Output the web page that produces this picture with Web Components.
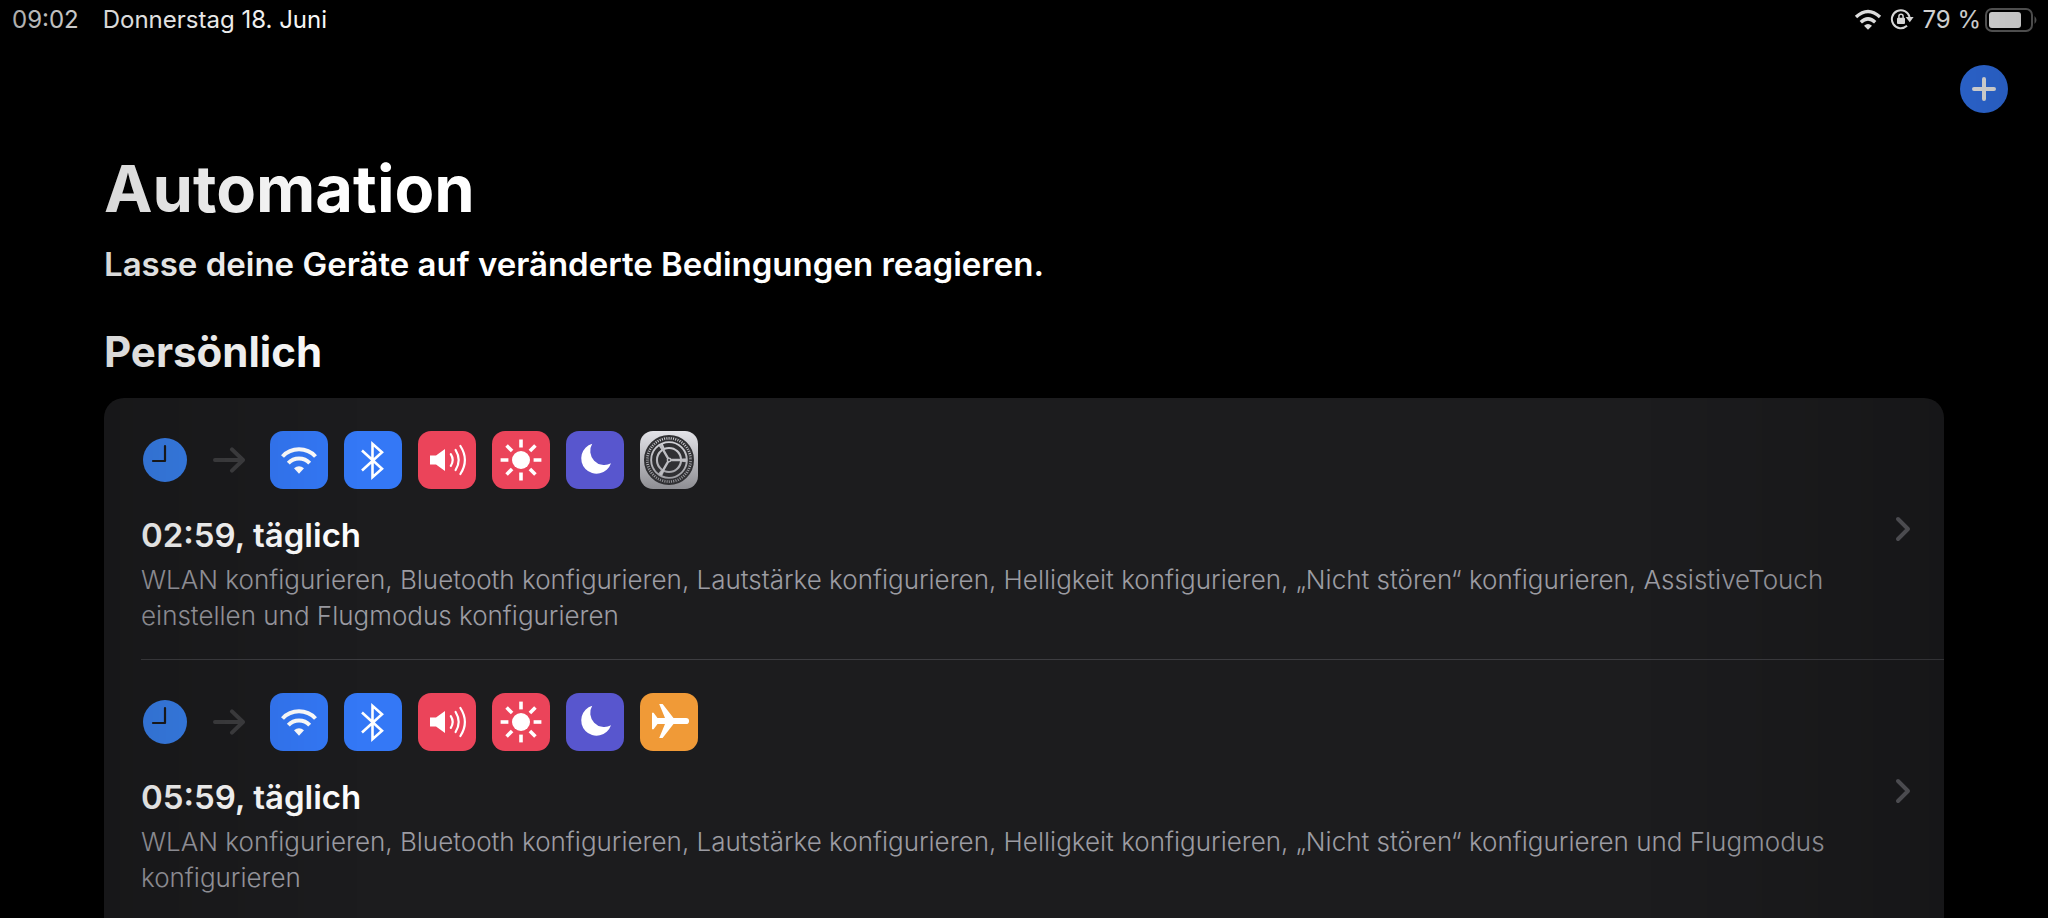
<!DOCTYPE html>
<html lang="de">
<head>
<meta charset="utf-8">
<meta name="viewport" content="width=device-width, initial-scale=1">
<title>Automation</title>
<style>
    html, body {
        margin: 0;
        height: 100%;
        background: #000;
        color: #fff;
        font-family: Inter, "Liberation Sans", sans-serif;
    }
</style>
</head>
<body>

<automation-app>
    <status-bar slot="status" time="09:02" date="Donnerstag 18. Juni" battery="79"></status-bar>
    <page-heading slot="heading" subtitle="Lasse deine Geräte auf veränderte Bedingungen reagieren.">Automation</page-heading>
    <automation-group label="Persönlich">
        <automation-row label="02:59, täglich" actions="wifi bluetooth volume brightness moon settings">
            WLAN konfigurieren, Bluetooth konfigurieren, Lautstärke konfigurieren, Helligkeit konfigurieren, „Nicht stören“ konfigurieren, AssistiveTouch einstellen und Flugmodus konfigurieren
        </automation-row>
        <automation-row label="05:59, täglich" actions="wifi bluetooth volume brightness moon airplane">
            WLAN konfigurieren, Bluetooth konfigurieren, Lautstärke konfigurieren, Helligkeit konfigurieren, „Nicht stören“ konfigurieren und Flugmodus konfigurieren
        </automation-row>
    </automation-group>
</automation-app>

<script>
const wifiShape = `
    <path d="M12.5 25.5A22.6 22.6 0 0 1 45.5 25.5M18.3 32.2A14.6 14.6 0 0 1 39.7 32.2" fill="none" stroke="#fff" stroke-width="4"/>
    <path d="M24 37.3Q29 33.2 34 37.3L29 42.7z" fill="#fff"/>`;

// one ray of the sun, turned in steps of 45 degrees
const rays = [0, 45, 90, 135, 180, 225, 270, 315]
    .map(a => `<path d="M29 8.6V16.4" transform="rotate(${a} 29 29)"/>`).join("");

const tiles = {
    wifi: { color: "#3478f6", shape: wifiShape },
    bluetooth: {
        color: "#3478f6",
        shape: `<path d="M18 19.5L38 37.7L28.5 46.2V12.8L38 21.3L18 39.5" fill="none" stroke="#fff" stroke-width="2.6"/>`
    },
    volume: {
        color: "#eb445a",
        shape: `<path d="M12 24.5H18L27 18V40L18 33.5H12z" fill="#fff"/>
            <path d="M32.8 23.2Q36.6 29 32.8 34.8M37.6 19Q43.8 29 37.6 39M42.4 15Q51.4 29 42.4 43" fill="none" stroke="#fff" stroke-width="2.2" stroke-linecap="round"/>`
    },
    brightness: {
        color: "#eb445a",
        shape: `<circle cx="29" cy="29" r="9" fill="#fff"/><g stroke="#fff" stroke-width="3.6">${rays}</g>`
    },
    moon: {
        color: "#5856ce",
        shape: `<path d="M26.2 12.7A15.3 15.3 0 1 0 45 32.3A14.1 14.1 0 0 1 26.2 12.7z" fill="#fff"/>`
    },
    settings: {
        color: "linear-gradient(#e3e3e8, #8e8e93)",
        shape: `<g fill="none" stroke="#303033">
            <circle cx="29" cy="29" r="24" stroke-width="2"/>
            <circle cx="29" cy="29" r="21.7" stroke-width="3" stroke-dasharray="1.3 0.97"/>
            <circle cx="29" cy="29" r="19.6" stroke-width="1.6"/>
            <circle cx="29" cy="29" r="15" stroke-width="3.8" stroke-dasharray="27.4 4" stroke-dashoffset="-2"/></g>
            <circle cx="29" cy="29" r="11" fill="#303033"/>
            <path d="M29 29H46.5M29 29L20.3 13.9M29 29L20.3 44.1" stroke="#bdbdc1" stroke-width="2.4"/>
            <circle cx="29" cy="29" r="2.4" fill="#bdbdc1"/><circle cx="29" cy="29" r="1" fill="#303033"/>`
    },
    airplane: {
        color: "#f09a37",
        shape: `<path d="M46 24.9H33.5L22.6 11H19.2L25 24.9H17.5L13.6 19.8H12V36.2H13.6L17.5 31.1H25L19.2 45H22.6L33.5 31.1H46A3.1 3.1 0 0 0 46 24.9z" fill="#fff"/>`
    }
};

class StatusBar extends HTMLElement {
    constructor() {
        super();
        this.attachShadow({ mode: "open" });
    }

    connectedCallback() {
        this.shadowRoot.innerHTML = `
          <style>
              :host {
                  display: flex;
                  align-items: center;
                  justify-content: space-between;
                  height: 40px;
                  padding: 0 10px 0 12px;
                  font-size: 24px;
                  line-height: 30px;
              }
              div { display: flex; align-items: center; }
              .left { gap: 24px; }
              .right { gap: 8px; }
              .battery { gap: 4px; }
              svg { display: block; }
          </style>
          <div class="left"><time>${this.getAttribute("time")}</time><span>${this.getAttribute("date")}</span></div>
          <div class="right">
              <svg width="28" height="22" viewBox="0 0 28 22" role="img" aria-label="WLAN">
                  <path d="M2 8Q14 -3 26 8M6.8 13.2Q14 6.6 21.2 13.2" fill="none" stroke="#fff" stroke-width="3.4"/>
                  <path d="M10 16.8Q14 13.4 18 16.8L14 20.8z" fill="#fff"/>
              </svg>
              <svg width="24" height="22" viewBox="0 0 24 22" role="img" aria-label="Ausrichtungssperre">
                  <path d="M19.6 8A9 9 0 1 0 17 16.8" fill="none" stroke="#fff" stroke-width="2"/>
                  <path d="M15.6 8H23.6L19.8 13.2z" fill="#fff"/>
                  <rect x="7" y="8.8" width="8" height="6.2" rx="1" fill="#fff"/>
                  <path d="M8.9 9.4V7.4A2.1 2.1 0 0 1 13.1 7.4V9.4" fill="none" stroke="#fff" stroke-width="1.5"/>
              </svg>
              <div class="battery">
                  <span>${this.getAttribute("battery")} %</span>
                  <svg width="53" height="24" viewBox="0 0 53 24" role="img" aria-label="Batterie">
                      <rect x="1" y="1" width="46" height="22" rx="6" fill="none" stroke="#666" stroke-width="2"/>
                      <rect x="4" y="4" width="32" height="16" rx="3" fill="#fff"/>
                      <path d="M49.5 8Q53.5 12 49.5 16z" fill="#666"/>
                  </svg>
              </div>
          </div>
        `;
    }
}

class PageHeading extends HTMLElement {
    constructor() {
        super();
        this.attachShadow({ mode: "open" });
    }

    connectedCallback() {
        this.shadowRoot.innerHTML = `
          <style>
              :host { display: block; }
              h1, p { margin: 0; }
              h1 { font-size: 65px; line-height: 82px; font-weight: 700; }
              p { margin-top: 14px; font-size: 33px; line-height: 40px; font-weight: 600; }
          </style>
          <h1><slot></slot></h1>
          <p>${this.getAttribute("subtitle")}</p>
        `;
    }
}

class AutomationGroup extends HTMLElement {
    constructor() {
        super();
        this.attachShadow({ mode: "open" });
    }

    connectedCallback() {
        this.shadowRoot.innerHTML = `
          <style>
              :host { display: block; }
              h2 { margin: 0 0 20px; font-size: 42px; line-height: 53px; font-weight: 700; }
              .card { background: #1c1c1e; border-radius: 20px 20px 0 0; overflow: hidden; }
              ::slotted(:not(:last-child)) { border-bottom: 1px solid #3d3d41; }
          </style>
          <h2>${this.getAttribute("label")}</h2>
          <div class="card"><slot></slot></div>
        `;
    }
}

class ActionIcon extends HTMLElement {
    constructor() {
        super();
        this.attachShadow({ mode: "open" });
    }

    connectedCallback() {
        const tile = tiles[this.getAttribute("name")];
        this.shadowRoot.innerHTML = `
          <style>
              :host {
                  display: block;
                  width: 58px;
                  height: 58px;
                  border-radius: 13px;
                  background: ${tile.color};
              }
              svg { display: block; }
          </style>
          <svg width="58" height="58" viewBox="0 0 58 58" aria-hidden="true">${tile.shape}</svg>
        `;
    }
}

class AutomationRow extends HTMLElement {
    constructor() {
        super();
        this.attachShadow({ mode: "open" });
    }

    connectedCallback() {
        const icons = this.getAttribute("actions").split(" ")
            .map(name => `<action-icon name="${name}"></action-icon>`).join("");

        this.shadowRoot.innerHTML = `
          <style>
              :host { display: block; margin-left: 37px; }
              a {
                  display: flex;
                  align-items: center;
                  gap: 32px;
                  padding-right: 32px;
                  color: inherit;
                  text-decoration: none;
              }
              .body { flex: 1; padding: 33px 0 25px; }
              .icons { display: flex; align-items: center; gap: 16px; }
              .clock { margin: 0 10px 0 2px; }
              .arrow { margin-right: 9px; }
              h3 { margin: 26px 0 7px; font-size: 33px; line-height: 40px; font-weight: 600; }
              p { margin: 0; color: #9c9ca3; font-size: 26px; line-height: 36px; font-weight: 300; }
              svg { display: block; flex: none; }
          </style>
          <a href="#automation">
              <div class="body">
                  <div class="icons">
                      <svg class="clock" width="44" height="44" viewBox="0 0 44 44" aria-hidden="true">
                          <circle cx="22" cy="22" r="22" fill="#3a82f0"/>
                          <path d="M22 8V23H10" fill="none" stroke="#1c1c1e" stroke-width="2.2" stroke-linecap="round" stroke-linejoin="round"/>
                      </svg>
                      <svg class="arrow" width="32" height="26" viewBox="0 0 32 26" aria-hidden="true">
                          <path d="M2 13H29M19 2.4L30 13L19 23.6" fill="none" stroke="#3e3e40" stroke-width="4" stroke-linecap="round" stroke-linejoin="round"/>
                      </svg>
                      ${icons}
                  </div>
                  <h3>${this.getAttribute("label")}</h3>
                  <p><slot></slot></p>
              </div>
              <svg width="18" height="26" viewBox="0 0 18 26" aria-hidden="true">
                  <path d="M4 3L14 13L4 23" fill="none" stroke="#5a5a5f" stroke-width="4" stroke-linecap="round" stroke-linejoin="round"/>
              </svg>
          </a>
        `;
    }
}

class AutomationApp extends HTMLElement {
    constructor() {
        super();
        this.attachShadow({ mode: "open" });
        this.shadowRoot.innerHTML = `
          <style>
              :host {
                  display: flex;
                  flex-direction: column;
                  height: 100vh;
                  overflow: hidden;
              }
              .toolbar { display: flex; justify-content: flex-end; padding: 25px 40px 0; }
              button {
                  display: grid;
                  place-items: center;
                  width: 48px;
                  height: 48px;
                  padding: 0;
                  border: 0;
                  border-radius: 50%;
                  background: #3478f6;
              }
              main {
                  display: flex;
                  flex: 1;
                  flex-direction: column;
                  gap: 41px;
                  min-height: 0;
                  padding: 35px 104px 0;
                  overflow-y: auto;
                  scrollbar-width: none;
              }
              /* darkening toward both sides of the screen */
              .shade {
                  position: fixed;
                  inset: 0;
                  pointer-events: none;
                  background: linear-gradient(to right, rgba(0,0,0,.34), rgba(0,0,0,.15) 110px, transparent 360px,
                      transparent calc(100% - 400px), rgba(0,0,0,.19) calc(100% - 104px), rgba(0,0,0,.26));
              }
          </style>
          <slot name="status"></slot>
          <div class="toolbar">
              <button type="button" aria-label="Automation hinzufügen">
                  <svg width="24" height="24" viewBox="0 0 24 24" aria-hidden="true">
                      <path d="M12 2V22M2 12H22" stroke="#fff" stroke-width="4" stroke-linecap="round"/>
                  </svg>
              </button>
          </div>
          <main>
              <slot name="heading"></slot>
              <slot></slot>
          </main>
          <div class="shade"></div>
        `;
    }
}

window.customElements.define('action-icon', ActionIcon);
window.customElements.define('status-bar', StatusBar);
window.customElements.define('page-heading', PageHeading);
window.customElements.define('automation-row', AutomationRow);
window.customElements.define('automation-group', AutomationGroup);
window.customElements.define('automation-app', AutomationApp);
</script>
</body>
</html>
